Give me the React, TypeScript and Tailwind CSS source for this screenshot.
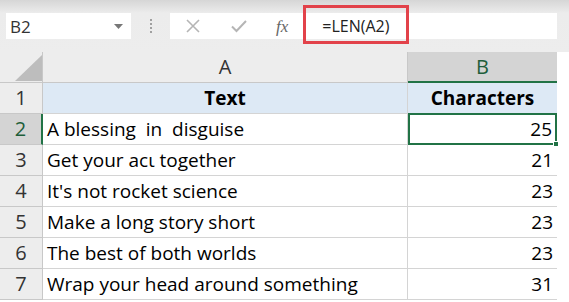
import React from "react";

const rows: [string, string][] = [
  ["A blessing  in  disguise", "25"],
  ["Get your acι together", "21"],
  ["It's not rocket science", "23"],
  ["Make a long story short", "23"],
  ["The best of both worlds", "23"],
  ["Wrap your head around something", "31"],
];

export default function App() {
  return (
    <div className="w-[569px] h-[302px] overflow-hidden bg-white font-['Open_Sans',sans-serif] text-black">
      {/* top formula area */}
      <div className="relative h-[52px] bg-gradient-to-b from-[#d6d6d6] via-[#ececec] via-[25%] to-[#ededed] pt-[13px] pl-[6px] pr-[12px] flex items-start">
        <div className="w-[125px] h-[26px] bg-white flex items-center justify-between pl-[4px] pr-[8px]">
          <span className="text-[17px] leading-none text-[#333]">B2</span>
          <svg width="9" height="5" viewBox="0 0 9 5"><path d="M0 0 L9 0 L4.5 5 Z" fill="#777" /></svg>
        </div>
        <div className="w-[39px] h-[26px] flex flex-col items-center justify-center gap-[2px]">
          <span className="w-[2px] h-[2px] bg-[#a0a0a0]" />
          <span className="w-[2px] h-[2px] bg-[#a0a0a0]" />
          <span className="w-[2px] h-[2px] bg-[#a0a0a0]" />
          <span className="w-[2px] h-[2px] bg-[#a0a0a0]" />
        </div>
        <div className="flex-1 h-[26px] bg-white flex items-center">
          <svg className="ml-[16px]" width="14" height="14" viewBox="0 0 14 14"><path d="M1 1 L13 13 M13 1 L1 13" stroke="#b5b5b5" strokeWidth="1.6" /></svg>
          <svg className="ml-[31px]" width="16" height="14" viewBox="0 0 16 14"><path d="M1 7.5 L5.5 12 L15 2" stroke="#b5b5b5" strokeWidth="2" fill="none" /></svg>
          <span className="ml-[29px] font-['Liberation_Serif',serif] italic text-[17px] leading-none text-[#666]">fx</span>
          <span className="ml-[34px] text-[16px] leading-none text-[#222]">=LEN(A2)</span>
        </div>
        <div className="absolute left-[303px] top-[5px] w-[106px] h-[39px] border-[3px] border-[#e2424a]" />
      </div>

      {/* sheet grid */}
      <div className="grid grid-cols-[43px_365px_149px_12px] auto-rows-[31px]">
        {/* column headers */}
        <div className="relative bg-[#ededed] border-b border-r border-[#c8c8c8]">
          <svg className="absolute left-[15px] top-[3px]" width="27" height="26" viewBox="0 0 27 26"><path d="M27 0 L27 26 L0 26 Z" fill="#bdbdbd" /></svg>
        </div>
        <div className="bg-[#ededed] border-b border-r border-[#c8c8c8] flex items-center justify-center text-[20px] text-[#333]">A</div>
        <div className="bg-[#d4d4d4] border-b-2 border-b-[#217346] flex items-center justify-center text-[20px] text-[#1e5e3a]">B</div>
        <div className="bg-white" />

        {/* row 1 */}
        <div className="bg-[#ededed] border-b border-r border-[#c8c8c8] flex items-center justify-center text-[20px] text-[#333]">1</div>
        <div className="bg-[#dde9f5] border-b border-r border-[#d4d4d4] flex items-center justify-center text-[19px] font-bold">Text</div>
        <div className="bg-[#dde9f5] border-b border-[#d4d4d4] flex items-center justify-center text-[19px] font-bold">Characters</div>
        <div className="bg-white" />

        {rows.map(([t, n], i) => {
          const sel = i === 0;
          return (
            <React.Fragment key={i}>
              <div
                className={
                  sel
                    ? "bg-[#d4d4d4] border-b border-[#c8c8c8] border-r-2 border-r-[#217346] flex items-center justify-center text-[20px] text-[#1e5e3a]"
                    : "bg-[#ededed] border-b border-r border-[#c8c8c8] flex items-center justify-center text-[20px] text-[#333]"
                }
              >
                {i + 2}
              </div>
              <div className="border-b border-r border-[#d4d4d4] flex items-center pl-[4px] text-[19px] whitespace-pre">{t}</div>
              <div
                className={
                  sel
                    ? "relative -mt-px border-2 border-[#217346] flex items-center justify-end pr-[3px] text-[19px]"
                    : "border-b border-[#d4d4d4] flex items-center justify-end pr-[4px] text-[19px]"
                }
              >
                {n}
                {sel && <span className="absolute -right-[4px] -bottom-[4px] w-[6px] h-[6px] bg-[#217346] border border-white" />}
              </div>
              <div className="bg-white" />
            </React.Fragment>
          );
        })}
      </div>
    </div>
  );
}
